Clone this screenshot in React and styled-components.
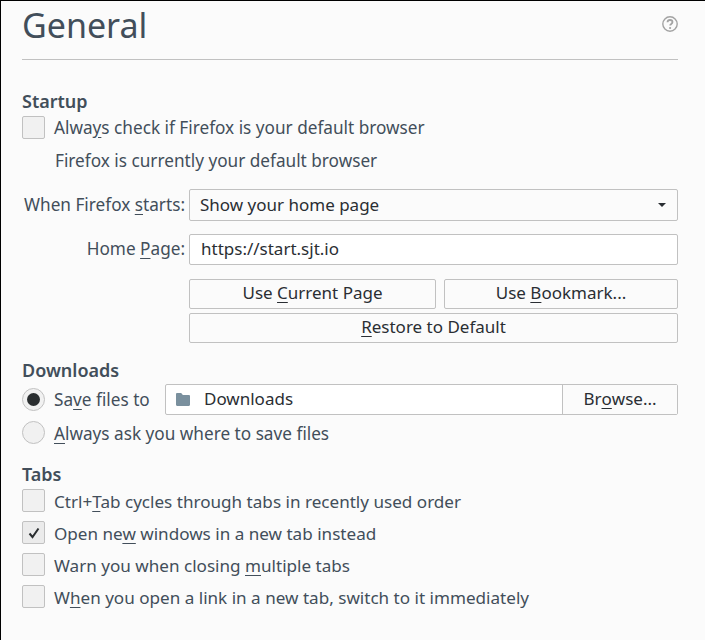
import React from "react";
import styled, { createGlobalStyle } from "styled-components";

const GlobalStyle = createGlobalStyle`
  html, body {
    margin: 0;
    padding: 0;
    background: #fbfbfb;
  }
  * {
    box-sizing: border-box;
  }
`;

const App = () => {
  return (
    <>
      <GlobalStyle />
      <Page>
        <Header>
          <Title>General</Title>
          <HelpIcon viewBox="0 0 16 16">
            <circle cx="8" cy="8" r="7.2" fill="none" stroke="#a3a3a3" strokeWidth="1.4" />
            <path
              d="M5.500 6.200C5.600 4.800 6.700 4 8 4c1.500 0 2.500.9 2.500 2.100 0 1-.6 1.500-1.300 2-.7.4-1 .8-1 1.500"
              fill="none"
              stroke="#a3a3a3"
              strokeWidth="1.800"
            />
            <circle cx="8.100" cy="12" r="1.100" fill="#a3a3a3" />
          </HelpIcon>
        </Header>

        <Section>
          <SectionTitle>Startup</SectionTitle>
          <OptionRow>
            <CheckBox />
            <OptionText>
              Alwa<Key>y</Key>s check if Firefox is your default browser
            </OptionText>
          </OptionRow>
          <Note>Firefox is currently your default browser</Note>

          <FormGrid>
            <FieldLabel>
              When Firefox <Key>s</Key>tarts:
            </FieldLabel>
            <Select>
              Show your home page
              <Caret />
            </Select>
            <FieldLabel>
              Home <Key>P</Key>age:
            </FieldLabel>
            <TextInput>https://start.sjt.io</TextInput>
            <ButtonGrid>
              <Button>
                Use <Key>C</Key>urrent Page
              </Button>
              <Button>
                Use <Key>B</Key>ookmark...
              </Button>
              <WideButton>
                <Key>R</Key>estore to Default
              </WideButton>
            </ButtonGrid>
          </FormGrid>
        </Section>

        <DownloadsSection>
          <SectionTitle>Downloads</SectionTitle>
          <SaveRow>
            <Radio $selected />
            <SaveLabel>
              Sa<Key>v</Key>e files to
            </SaveLabel>
            <FileField>
              <FilePath>
                <FolderIcon viewBox="0 0 14 13">
                  <path
                    d="M0 1.200C0 .5.500 0 1.200 0h3.600c.4 0 .7.200.9.500L6.800 2h6c.7 0 1.200.5 1.200 1.200v8.600c0 .7-.5 1.200-1.200 1.200H1.200C.5 13 0 12.500 0 11.800z"
                    fill="#7a909e"
                  />
                </FolderIcon>
                <FileName>Downloads</FileName>
              </FilePath>
              <BrowseButton>
                Br<Key>o</Key>wse...
              </BrowseButton>
            </FileField>
          </SaveRow>
          <AskRow>
            <Radio />
            <LowText>
              <Key>A</Key>lways ask you where to save files
            </LowText>
          </AskRow>
        </DownloadsSection>

        <TabsSection>
          <SectionTitle>Tabs</SectionTitle>
          <TabOptions>
            <OptionRow>
              <CheckBox />
              <TabText>
                Ctrl+<Key>T</Key>ab cycles through tabs in recently used order
              </TabText>
            </OptionRow>
            <OptionRow>
              <CheckBox $checked>
                <CheckIcon viewBox="0 0 12 12">
                  <path d="M1.500 6.500 4.500 10 10.500 1.500" fill="none" stroke="#2a2e30" strokeWidth="2" />
                </CheckIcon>
              </CheckBox>
              <TabText>
                Open ne<Key>w</Key> windows in a new tab instead
              </TabText>
            </OptionRow>
            <OptionRow>
              <CheckBox />
              <TabText>
                Warn you when closing <Key>m</Key>ultiple tabs
              </TabText>
            </OptionRow>
            <OptionRow>
              <CheckBox />
              <TabText>
                W<Key>h</Key>en you open a link in a new tab, switch to it immediately
              </TabText>
            </OptionRow>
          </TabOptions>
        </TabsSection>
      </Page>
    </>
  );
};

const Page = styled.div`
  width: 705px;
  height: 640px;
  overflow: hidden;
  background: #fbfbfb;
  border-top: 1px solid #000;
  border-left: 1px solid #000;
  padding: 0 27px 0 21px;
  font-family: "Noto Sans", "Open Sans", sans-serif;
  font-size: 17px;
  color: #424e5a;
`;

const Header = styled.div`
  height: 59px;
  display: flex;
  justify-content: space-between;
  align-items: flex-start;
  border-bottom: 1px solid #c1c1c1;
`;

const Title = styled.h1`
  margin: 2px 0 0;
  font-size: 34px;
  line-height: 44px;
  font-weight: 400;
  color: #424e5a;
`;

const HelpIcon = styled.svg`
  width: 16px;
  height: 16px;
  margin-top: 15px;
`;

const Section = styled.section`
  margin-top: 29px;
`;

const DownloadsSection = styled.section`
  margin-top: 15px;
`;

const TabsSection = styled.section`
  margin-top: 18px;
`;

const SectionTitle = styled.h2`
  margin: 0;
  height: 27px;
  font-size: 18px;
  line-height: 24px;
  font-weight: 600;
  color: #424e5a;
`;

const OptionRow = styled.label`
  display: flex;
  align-items: center;
  gap: 9px;
  height: 23px;
`;

const OptionText = styled.span`
  font-size: 17.2px;
  line-height: 23px;
  white-space: nowrap;
`;

const LowText = styled(OptionText)`
  margin-top: 2px;
`;

const TabText = styled(LowText)`
  font-size: 17.1px;
`;

const Key = styled.span`
  text-decoration: underline;
  text-underline-offset: 3px;
`;

const CheckBox = styled.span`
  flex: none;
  width: 23px;
  height: 23px;
  display: flex;
  align-items: center;
  justify-content: center;
  border: 1px solid #c1c1c1;
  border-radius: 2px;
  background: ${(props) => (props.$checked ? "#ebebeb" : "#f1f1f1")};
`;

const CheckIcon = styled.svg`
  width: 12px;
  height: 12px;
`;

const Note = styled.div`
  margin: 10px 0 0 33px;
  font-size: 17.2px;
  line-height: 23px;
`;

const FormGrid = styled.div`
  display: grid;
  grid-template-columns: 163px 1fr;
  column-gap: 4px;
  row-gap: 13px;
  margin-top: 17px;
`;

const FieldLabel = styled.div`
  padding-bottom: 2px;
  font-size: 17.2px;
  text-align: right;
  align-self: center;
  white-space: nowrap;
`;

const Select = styled.div`
  height: 32px;
  display: flex;
  align-items: center;
  justify-content: space-between;
  padding: 0 11px 1px 10px;
  border: 1px solid #c1c1c1;
  border-radius: 2px;
  background: #fbfbfb;
  color: #2a2e33;
`;

const Caret = styled.span`
  width: 0;
  height: 0;
  border-left: 4px solid transparent;
  border-right: 4px solid transparent;
  border-top: 4px solid #2a2e33;
`;

const TextInput = styled.div`
  height: 31px;
  display: flex;
  align-items: center;
  padding: 0 11px 2px;
  border: 1px solid #c1c1c1;
  border-radius: 2px;
  background: #fff;
  color: #2a2e33;
`;

const ButtonGrid = styled.div`
  grid-column: 2;
  display: grid;
  grid-template-columns: 247px 1fr;
  column-gap: 8px;
  row-gap: 4px;
  margin-top: 1px;
`;

const Button = styled.div`
  height: 30px;
  display: flex;
  align-items: center;
  justify-content: center;
  padding-bottom: 3px;
  border: 1px solid #c1c1c1;
  border-radius: 2px;
  background: #fbfbfb;
  color: #2a2e33;
  white-space: pre;
`;

const WideButton = styled(Button)`
  grid-column: 1 / -1;
`;

const SaveRow = styled.div`
  display: flex;
  align-items: center;
  gap: 9px;
  height: 31px;
  margin-top: -1px;
`;

const AskRow = styled.label`
  display: flex;
  align-items: center;
  gap: 9px;
  height: 23px;
  margin-top: 6px;
`;

const SaveLabel = styled.span`
  width: 102px;
  font-size: 17.2px;
  white-space: nowrap;
`;

const Radio = styled.span`
  flex: none;
  width: 23px;
  height: 23px;
  display: flex;
  align-items: center;
  justify-content: center;
  border: 1px solid #c1c1c1;
  border-radius: 50%;
  background: #f1f1f1;
  &::after {
    content: "";
    display: ${(props) => (props.$selected ? "block" : "none")};
    width: 13px;
    height: 13px;
    border-radius: 50%;
    background: #2a2e30;
  }
`;

const FileField = styled.div`
  flex: 1;
  height: 31px;
  display: flex;
  border: 1px solid #c1c1c1;
  border-radius: 2px;
  background: #fff;
  color: #2a2e33;
`;

const FilePath = styled.div`
  flex: 1;
  display: flex;
  align-items: center;
  gap: 14px;
  padding-left: 10px;
`;

const FileName = styled.span`
  margin-bottom: 2px;
`;

const FolderIcon = styled.svg`
  width: 14px;
  height: 13px;
`;

const BrowseButton = styled.div`
  width: 115px;
  display: flex;
  align-items: center;
  justify-content: center;
  padding-bottom: 2px;
  border-left: 1px solid #c1c1c1;
  background: #fbfbfb;
  white-space: pre;
`;

const TabOptions = styled.div`
  display: flex;
  flex-direction: column;
  gap: 9px;
`;

export default App;
